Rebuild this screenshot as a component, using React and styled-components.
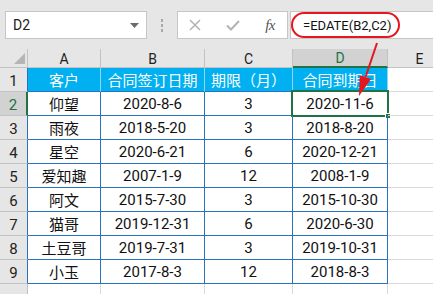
import React from "react";
import styled, { createGlobalStyle, css } from "styled-components";

const Global = createGlobalStyle`
  html, body { margin: 0; padding: 0; background: #ffffff; }
  body { font-family: Roboto, "Noto Sans CJK SC", sans-serif; }
  * { box-sizing: border-box; }
`;

const GREEN = "#217346";
const BLUE = "#2a72bd";
const CYAN = "#00b0f0";
const HEAD_BG = "#e6e6e6";
const HEAD_LINE = "#c2c2c2";
const GRID = "#d9d9d9";

const Page = styled.div`
  position: relative;
  width: 433px;
  height: 294px;
  overflow: hidden;
  background: ${HEAD_BG};
`;

const Toolbar = styled.div`
  height: 49px;
  display: flex;
  align-items: flex-start;
  padding: 11px 0 0 5px;
  background: ${HEAD_BG};
`;

const Box = styled.div`
  height: 28px;
  background: #ffffff;
  border: 1px solid #c6c6c6;
  display: flex;
  align-items: center;
`;

const NameBox = styled(Box)`
  width: 142px;
  padding: 0 7px 0 7px;
  justify-content: space-between;
  font-size: 14px;
  color: #222;
`;

const Grip = styled.div`
  width: 30px;
  height: 28px;
  display: flex;
  flex-direction: column;
  align-items: center;
  justify-content: center;
  gap: 2px;
  & > span {
    width: 2px;
    height: 3px;
    background: #a8a8a8;
  }
`;

const FxBox = styled(Box)`
  width: 111px;
  padding: 0 8px 0 11px;
  justify-content: space-between;
`;

const Fx = styled.span`
  font-family: "Liberation Serif", serif;
  font-style: italic;
  font-size: 15px;
  color: #555;
  letter-spacing: -0.5px;
  padding-right: 4px;
`;

const FormulaBox = styled(Box)`
  flex: 1;
  margin-left: 2px;
  border-right: none;
  padding-left: 0;
`;

const Formula = styled.span`
  display: inline-flex;
  align-items: center;
  height: 26px;
  padding: 0 7px 0 10px;
  border: 2px solid #e5161d;
  border-radius: 13px;
  font-size: 13px;
  color: #111;
`;

const Sheet = styled.div`
  display: grid;
  grid-template-columns: 28px 73px 104px 88px 95px 64px;
  grid-template-rows: 19px repeat(10, 24px);
  background: #ffffff;
`;

const Corner = styled.div`
  background: ${HEAD_BG};
  border-right: 1px solid ${HEAD_LINE};
  border-bottom: 1px solid ${HEAD_LINE};
  display: flex;
  align-items: flex-end;
  justify-content: flex-end;
  padding: 0 2px 3px 0;
`;

const ColHead = styled.div`
  background: ${(p) => (p.$selected ? "#d2d2d2" : HEAD_BG)};
  border-right: 1px solid ${HEAD_LINE};
  border-bottom: ${(p) => (p.$selected ? `2px solid ${GREEN}` : `1px solid ${HEAD_LINE}`)};
  color: ${(p) => (p.$selected ? GREEN : "#222")};
  font-size: 14px;
  display: flex;
  align-items: flex-end;
  justify-content: center;
  line-height: 16px;
`;

const RowHead = styled.div`
  background: ${(p) => (p.$selected ? "#d2d2d2" : HEAD_BG)};
  border-bottom: 1px solid ${HEAD_LINE};
  border-right: ${(p) =>
    p.$selected ? `2px solid ${GREEN}` : `1px solid ${p.$edge || HEAD_LINE}`};
  color: ${(p) => (p.$selected ? GREEN : "#222")};
  font-size: 15px;
  display: flex;
  align-items: center;
  justify-content: center;
  padding-top: 2px;
`;

const Cell = styled.div`
  position: relative;
  display: flex;
  align-items: center;
  justify-content: center;
  font-size: 15px;
  color: #111;
  white-space: nowrap;
  border-right: 1px solid ${GRID};
  border-bottom: 1px solid ${GRID};
  ${(p) =>
    p.$kind === "title" &&
    css`
      background: ${CYAN};
      color: #ffffff;
      border-right-color: #8fd8f5;
      border-bottom-color: ${BLUE};
    `}
  ${(p) =>
    p.$kind === "table" &&
    css`
      border-right-color: ${BLUE};
      border-bottom-color: ${BLUE};
    `}
`;

const Selection = styled.div`
  position: absolute;
  left: -2px;
  top: -2px;
  right: -2px;
  bottom: -2px;
  border: 2px solid ${GREEN};
  pointer-events: none;
`;

const FillHandle = styled.div`
  position: absolute;
  right: -4px;
  bottom: -4px;
  width: 6px;
  height: 6px;
  background: ${GREEN};
  border: 1px solid #ffffff;
`;

const ArrowLayer = styled.svg`
  position: absolute;
  left: 350px;
  top: 40px;
  pointer-events: none;
`;

const columns = ["A", "B", "C", "D", "E"];
const titles = ["客户", "合同签订日期", "期限（月）", "合同到期日"];
const rows = [
  ["仰望", "2020-8-6", "3", "2020-11-6"],
  ["雨夜", "2018-5-20", "3", "2018-8-20"],
  ["星空", "2020-6-21", "6", "2020-12-21"],
  ["爱知趣", "2007-1-9", "12", "2008-1-9"],
  ["阿文", "2015-7-30", "3", "2015-10-30"],
  ["猫哥", "2019-12-31", "6", "2020-6-30"],
  ["土豆哥", "2019-7-31", "3", "2019-10-31"],
  ["小玉", "2017-8-3", "12", "2018-8-3"],
];

export default function App() {
  return (
    <>
      <Global />
      <Page>
        <Toolbar>
          <NameBox>
            <span>D2</span>
            <svg width="9" height="5" viewBox="0 0 9 5">
              <polygon points="0,0 9,0 4.5,5" fill="#6b6b6b" />
            </svg>
          </NameBox>
          <Grip>
            <span />
            <span />
            <span />
          </Grip>
          <FxBox>
            <svg width="12" height="12" viewBox="0 0 12 12">
              <path d="M1 1 L11 11 M11 1 L1 11" stroke="#b3b3b3" strokeWidth="1.5" fill="none" />
            </svg>
            <svg width="14" height="11" viewBox="0 0 14 11">
              <path d="M1 5.5 L5 9.5 L13 1" stroke="#b3b3b3" strokeWidth="2" fill="none" />
            </svg>
            <Fx>fx</Fx>
          </FxBox>
          <FormulaBox>
            <Formula>=EDATE(B2,C2)</Formula>
          </FormulaBox>
        </Toolbar>
        <Sheet>
          <Corner>
            <svg width="11" height="11" viewBox="0 0 11 11">
              <polygon points="11,0 11,11 0,11" fill="#b5b5b5" />
            </svg>
          </Corner>
          {columns.map((c) => (
            <ColHead key={c} $selected={c === "D"}>
              {c}
            </ColHead>
          ))}

          <RowHead $edge={BLUE}>1</RowHead>
          {titles.map((t) => (
            <Cell key={t} $kind="title">
              {t}
            </Cell>
          ))}
          <Cell />

          {rows.map((r, i) => (
            <React.Fragment key={i}>
              <RowHead $selected={i === 0} $edge={BLUE}>
                {i + 2}
              </RowHead>
              {r.map((v, j) => (
                <Cell key={j} $kind="table">
                  {v}
                  {i === 0 && j === 3 && (
                    <Selection>
                      <FillHandle />
                    </Selection>
                  )}
                </Cell>
              ))}
              <Cell />
            </React.Fragment>
          ))}

          <RowHead />
          {columns.map((c) => (
            <Cell key={c} />
          ))}
        </Sheet>
        <ArrowLayer width="35" height="60" viewBox="0 0 35 60">
          <line x1="27" y1="3" x2="15.4" y2="37.5" stroke="#e5161d" strokeWidth="2" />
          <polygon points="9,56 21.1,39 9.7,35.2" fill="#e5161d" />
        </ArrowLayer>
      </Page>
    </>
  );
}
